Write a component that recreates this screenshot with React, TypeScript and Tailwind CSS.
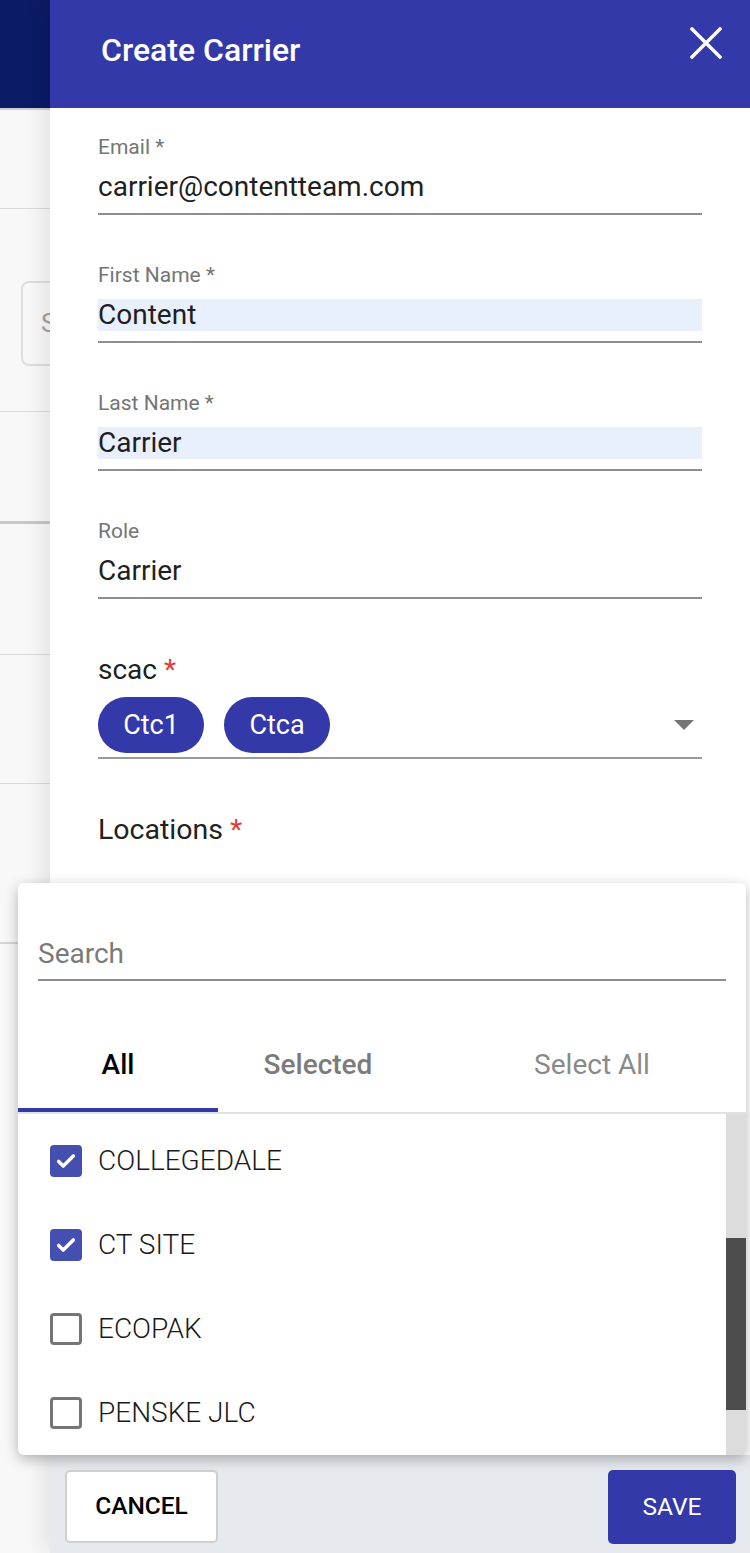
import React from "react";

const labelCls = "h-[22px] leading-[22px] text-[21px] text-[#757575]";

function Field({ label, value, filled }: { label: string; value: string; filled?: boolean }) {
  return (
    <div className="flex flex-col">
      <div className={labelCls}>{label}</div>
      <div
        className={`mt-[13px] h-[32px] leading-[32px] text-[28px] text-[#1f1f1f] ${filled ? "bg-[#e8f0fe]" : ""}`}
      >
        {value}
      </div>
      <div className="mt-[10px] h-[2px] bg-[#8e8e8e]" />
    </div>
  );
}

function CheckBox({ checked }: { checked: boolean }) {
  if (checked) {
    return (
      <div className="w-[32px] h-[32px] rounded-[4px] bg-[#4350b0] flex items-center justify-center shrink-0">
        <svg width="22" height="22" viewBox="0 0 24 24">
          <path d="M4 12.5l5 5L20 6.5" fill="none" stroke="white" strokeWidth="3.8" strokeLinecap="round" strokeLinejoin="round" />
        </svg>
      </div>
    );
  }
  return <div className="w-[32px] h-[32px] rounded-[4px] border-[3px] border-[#757575] shrink-0" />;
}

const locations = [
  { name: "COLLEGEDALE", checked: true },
  { name: "CT SITE", checked: true },
  { name: "ECOPAK", checked: false },
  { name: "PENSKE JLC", checked: false },
];

export default function App() {
  return (
    <div className="relative w-[750px] h-[1553px] overflow-hidden flex bg-[#f8f8f8] font-['Roboto',sans-serif]">
      {/* page behind the drawer */}
      <div className="w-[50px] shrink-0 flex flex-col overflow-hidden">
        <div className="h-[108px] bg-[#0b1b65] shrink-0" />
        <div className="h-[2px] bg-[#cfcfcf] shrink-0" />
        <div className="h-[98px] shrink-0" />
        <div className="h-[1px] bg-[#dadada] shrink-0" />
        <div className="h-[72px] shrink-0" />
        <div className="h-[85px] ml-[21px] w-[80px] border-2 border-[#dedede] rounded-[8px] pl-[18px] flex items-center text-[26px] text-[#a0a0a0] shrink-0">
          S
        </div>
        <div className="h-[45px] shrink-0" />
        <div className="h-[1px] bg-[#dadada] shrink-0" />
        <div className="h-[109px] shrink-0" />
        <div className="h-[3px] bg-[#c8c8c8] shrink-0" />
        <div className="h-[130px] shrink-0" />
        <div className="h-[1px] bg-[#dadada] shrink-0" />
        <div className="h-[128px] shrink-0" />
        <div className="h-[1px] bg-[#dadada] shrink-0" />
        <div className="h-[158px] shrink-0" />
        <div className="h-[2px] bg-[#d6d6d6] shrink-0" />
      </div>

      {/* drawer */}
      <div className="flex-1 flex flex-col bg-white shadow-[-10px_0_18px_rgba(0,0,0,0.07)]">
        <div className="h-[108px] shrink-0 bg-[#3339a8] flex justify-between pl-[51px] pr-[28px]">
          <div className="mt-[32px] h-[36px] leading-[36px] text-[32px] font-medium text-white">Create Carrier</div>
          <svg className="mt-[27px]" width="32" height="32" viewBox="0 0 32 32">
            <path d="M2 2L30 30M30 2L2 30" stroke="white" strokeWidth="3.4" strokeLinecap="square" />
          </svg>
        </div>

        <div className="flex-1 flex flex-col px-[48px] pt-[28px]">
          <div className="flex flex-col gap-[49px]">
            <Field label="Email *" value="carrier@contentteam.com" />
            <Field label="First Name *" value="Content" filled />
            <Field label="Last Name *" value="Carrier" filled />
            <Field label="Role" value="Carrier" />
          </div>

          <div className="mt-[57px] h-[28px] leading-[28px] text-[28px] text-[#212121]">
            scac <span className="text-[#e53935]">*</span>
          </div>
          <div className="mt-[13px] flex items-center gap-[20px] h-[56px]">
            <div className="h-[56px] w-[106px] rounded-full bg-[#3339a8] text-white text-[27px] flex items-center justify-center">
              Ctc1
            </div>
            <div className="h-[56px] w-[106px] rounded-full bg-[#3339a8] text-white text-[27px] flex items-center justify-center">
              Ctca
            </div>
            <svg className="ml-auto mr-[8px]" width="20" height="10" viewBox="0 0 20 10">
              <path d="M0 0h20L10 10z" fill="#757575" />
            </svg>
          </div>
          <div className="mt-[4px] h-[2px] bg-[#9a9a9a]" />

          <div className="mt-[56px] h-[30px] leading-[30px] text-[28.5px] text-[#212121]">
            Locations <span className="text-[#e53935]">*</span>
          </div>
        </div>

        <div className="h-[98px] shrink-0 bg-[#e6e9ed] flex justify-between pl-[15px] pr-[14px] pt-[15px]">
          <div className="w-[153px] h-[73px] bg-white border-2 border-[#cfcfcf] rounded-[5px] flex items-center justify-center text-[24.5px] font-medium text-black">
            CANCEL
          </div>
          <div className="w-[128px] h-[74px] bg-[#3339a8] rounded-[5px] flex items-center justify-center text-[24.5px] text-white">
            SAVE
          </div>
        </div>
      </div>

      {/* locations picker menu */}
      <div className="absolute left-[18px] top-[883px] w-[728px] h-[572px] rounded-[6px] bg-white shadow-[0_4px_14px_rgba(0,0,0,0.28)] overflow-hidden flex flex-col">
        <div className="pl-[20px] pr-[20px] pt-[57px]">
          <div className="h-[28px] leading-[28px] text-[28px] text-[#7a7a7a]">Search</div>
          <div className="mt-[11px] h-[2px] bg-[#8e8e8e]" />
        </div>

        <div className="mt-[37px] h-[94px] flex relative">
          <div className="w-[200px] flex items-center justify-center text-[28px] font-medium text-black relative">
            All
            <div className="absolute left-0 right-0 bottom-0 h-[4px] bg-[#3339a8]" />
          </div>
          <div className="w-[200px] flex items-center justify-center text-[28px] font-medium text-[#7b7b7b]">
            Selected
          </div>
          <div className="ml-auto w-[200px] mr-[54px] flex items-center justify-center text-[28px] text-[#8a8a8a]">
            Select All
          </div>
        </div>
        <div className="h-[2px] bg-[#e2e2e2]" />

        <div className="flex-1 flex">
          <div className="flex-1 flex flex-col pt-[5px]">
            {locations.map((l) => (
              <div key={l.name} className="h-[84px] flex items-center pl-[32px] gap-[16px]">
                <CheckBox checked={l.checked} />
                <span className="text-[28px] font-light text-[#1a1a1a]">{l.name}</span>
              </div>
            ))}
          </div>
          <div className="w-[20px] bg-[#dcdcdc] flex flex-col">
            <div className="h-[124px]" />
            <div className="h-[172px] bg-[#4d4d4d]" />
          </div>
        </div>
      </div>
    </div>
  );
}
